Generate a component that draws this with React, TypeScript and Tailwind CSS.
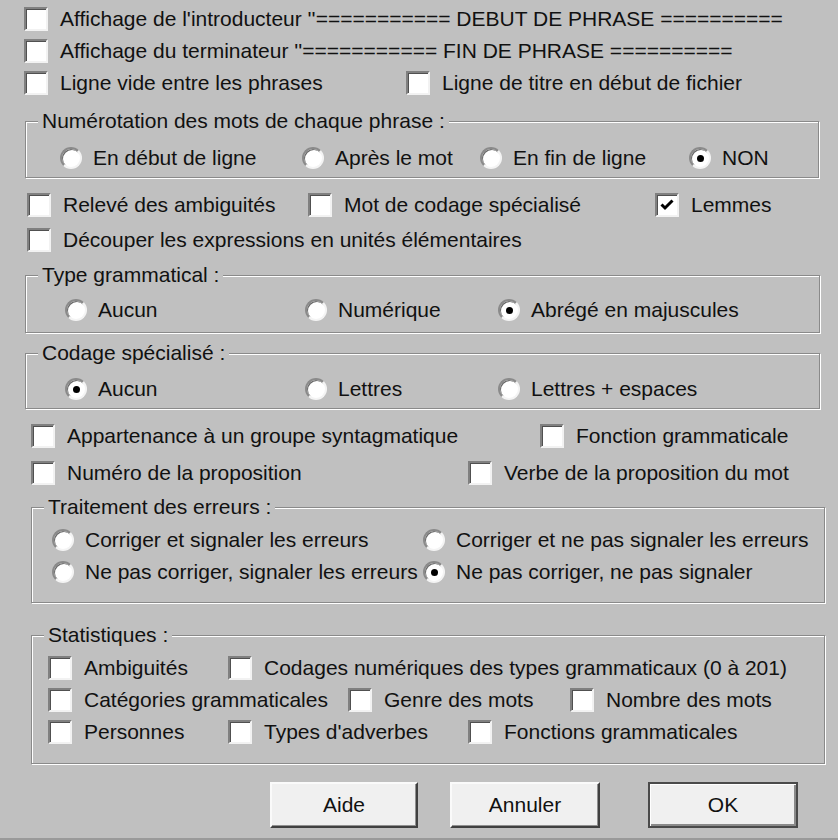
import React from "react";

function Check({ checked = false }: { checked?: boolean }) {
  return (
    <span className="box-border w-[24px] h-[24px] shrink-0 border-2 border-t-[#808080] border-l-[#808080] border-r-[#f2f2f2] border-b-[#f2f2f2] bg-white shadow-[inset_1px_1px_0_#505050] flex items-center justify-center">
      {checked && (
        <svg width="16" height="16" viewBox="0 0 16 16">
          <path d="M2.5 7.5 L6 11 L13.5 3.5" fill="none" stroke="#000" strokeWidth="3" />
        </svg>
      )}
    </span>
  );
}

function Radio({ checked = false }: { checked?: boolean }) {
  return (
    <span className="box-border w-[22px] h-[22px] shrink-0 rounded-full border-2 border-t-[#8a8a8a] border-l-[#8a8a8a] border-r-[#f4f4f4] border-b-[#f4f4f4] bg-white shadow-[inset_1px_1px_0_#6a6a6a] flex items-center justify-center">
      {checked && <span className="w-[7px] h-[7px] rounded-full bg-black" />}
    </span>
  );
}

function CItem({ label, checked, w }: { label: string; checked?: boolean; w?: string }) {
  return (
    <div className={"flex items-center shrink-0 " + (w ?? "")}>
      <Check checked={checked} />
      <span className="ml-[12px] whitespace-nowrap">{label}</span>
    </div>
  );
}

function RItem({ label, checked, w }: { label: string; checked?: boolean; w?: string }) {
  return (
    <div className={"flex items-center shrink-0 " + (w ?? "")}>
      <Radio checked={checked} />
      <span className="ml-[11px] whitespace-nowrap">{label}</span>
    </div>
  );
}

function Legend({ children }: { children: React.ReactNode }) {
  return (
    <legend className="ml-[12px] px-[4px] bg-[#c0c0c0] leading-[24px] whitespace-nowrap">{children}</legend>
  );
}

export default function App() {
  return (
    <div className="w-[838px] h-[840px] overflow-hidden bg-[#c0c0c0] text-[#111] text-[21px] leading-[24px] font-['Liberation_Sans',Arial,sans-serif] pt-[3px] border-b-2 border-b-[#9a9a9a] box-border">
      <div className="flex items-center h-[32px] pl-[24px]">
        <CItem label="Affichage de l'introducteur ''=========== DEBUT DE PHRASE ==========" />
      </div>
      <div className="flex items-center h-[32px] pl-[24px]">
        <CItem label="Affichage du terminateur ''=========== FIN DE PHRASE ==========" />
      </div>
      <div className="flex items-center h-[32px] pl-[24px]">
        <CItem label="Ligne vide entre les phrases" w="w-[382px]" />
        <CItem label="Ligne de titre en début de fichier" />
      </div>

      <fieldset className="ml-[25px] w-[794px] mt-[10px] pb-[3px] border border-[#8a8a8a] shadow-[1px_1px_0_#fff,inset_1px_1px_0_#fff]">
        <Legend>Numérotation des mots de chaque phrase :</Legend>
        <div className="flex items-center h-[32px] mt-[9px] pl-[34px]">
          <RItem label="En début de ligne" w="w-[242px]" />
          <RItem label="Après le mot" w="w-[178px]" />
          <RItem label="En fin de ligne" w="w-[209px]" />
          <RItem label="NON" checked />
        </div>
      </fieldset>

      <div className="flex items-center h-[35px] mt-[9px] pl-[27px]">
        <CItem label="Relevé des ambiguités" w="w-[281px]" />
        <CItem label="Mot de codage spécialisé" w="w-[347px]" />
        <CItem label="Lemmes" checked />
      </div>
      <div className="flex items-center h-[35px] pl-[27px]">
        <CItem label="Découper les expressions en unités élémentaires" />
      </div>

      <fieldset className="ml-[25px] w-[795px] mt-[6px] pb-[6px] border border-[#8a8a8a] shadow-[1px_1px_0_#fff,inset_1px_1px_0_#fff]">
        <Legend>Type grammatical :</Legend>
        <div className="flex items-center h-[32px] mt-[7px] pl-[39px]">
          <RItem label="Aucun" w="w-[240px]" />
          <RItem label="Numérique" w="w-[193px]" />
          <RItem label="Abrégé en majuscules" checked />
        </div>
      </fieldset>

      <fieldset className="ml-[25px] w-[795px] mt-[8px] pb-[3px] border border-[#8a8a8a] shadow-[1px_1px_0_#fff,inset_1px_1px_0_#fff]">
        <Legend>Codage spécialisé :</Legend>
        <div className="flex items-center h-[32px] mt-[8px] pl-[39px]">
          <RItem label="Aucun" checked w="w-[240px]" />
          <RItem label="Lettres" w="w-[193px]" />
          <RItem label="Lettres + espaces" />
        </div>
      </fieldset>

      <div className="flex items-center h-[37px] mt-[8px] pl-[31px]">
        <CItem label="Appartenance à un groupe syntagmatique" w="w-[509px]" />
        <CItem label="Fonction grammaticale" />
      </div>
      <div className="flex items-center h-[37px] pl-[31px]">
        <CItem label="Numéro de la proposition" w="w-[437px]" />
        <CItem label="Verbe de la proposition du mot" />
      </div>

      <fieldset className="ml-[31px] w-[794px] mt-[4px] pb-[14px] border border-[#8a8a8a] shadow-[1px_1px_0_#fff,inset_1px_1px_0_#fff]">
        <Legend>Traitement des erreurs :</Legend>
        <div className="mt-[5px] pl-[20px]">
          <div className="flex items-center h-[32px]">
            <RItem label="Corriger et signaler les erreurs" w="w-[371px]" />
            <RItem label="Corriger et ne pas signaler les erreurs" />
          </div>
          <div className="flex items-center h-[32px]">
            <RItem label="Ne pas corriger, signaler les erreurs" w="w-[371px]" />
            <RItem label="Ne pas corriger, ne pas signaler" checked />
          </div>
        </div>
      </fieldset>

      <fieldset className="ml-[31px] w-[794px] mt-[20px] pb-[15px] border border-[#8a8a8a] shadow-[1px_1px_0_#fff,inset_1px_1px_0_#fff]">
        <Legend>Statistiques :</Legend>
        <div className="mt-[5px] pl-[16px]">
          <div className="flex items-center h-[32px]">
            <CItem label="Ambiguités" w="w-[180px]" />
            <CItem label="Codages numériques des types grammaticaux (0 à 201)" />
          </div>
          <div className="flex items-center h-[32px]">
            <CItem label="Catégories grammaticales" w="w-[300px]" />
            <CItem label="Genre des mots" w="w-[222px]" />
            <CItem label="Nombre des mots" />
          </div>
          <div className="flex items-center h-[32px]">
            <CItem label="Personnes" w="w-[180px]" />
            <CItem label="Types d'adverbes" w="w-[240px]" />
            <CItem label="Fonctions grammaticales" />
          </div>
        </div>
      </fieldset>

      <div className="flex mt-[18px] pl-[270px]">
        <button className="box-border w-[148px] h-[46px] bg-[#f0f0f0] border-2 border-t-[#fafafa] border-l-[#fafafa] border-r-[#404040] border-b-[#404040] shadow-[inset_-1px_-1px_0_#909090] flex items-center justify-center">
          Aide
        </button>
        <button className="box-border ml-[32px] w-[150px] h-[46px] bg-[#f0f0f0] border-2 border-t-[#fafafa] border-l-[#fafafa] border-r-[#404040] border-b-[#404040] shadow-[inset_-1px_-1px_0_#909090] flex items-center justify-center">
          Annuler
        </button>
        <button className="box-border ml-[48px] w-[150px] h-[46px] bg-[#f0f0f0] border-2 border-[#4a4a4a] shadow-[inset_1px_1px_0_#fff,inset_-2px_-2px_0_#8a8a8a] flex items-center justify-center">
          OK
        </button>
      </div>
    </div>
  );
}
